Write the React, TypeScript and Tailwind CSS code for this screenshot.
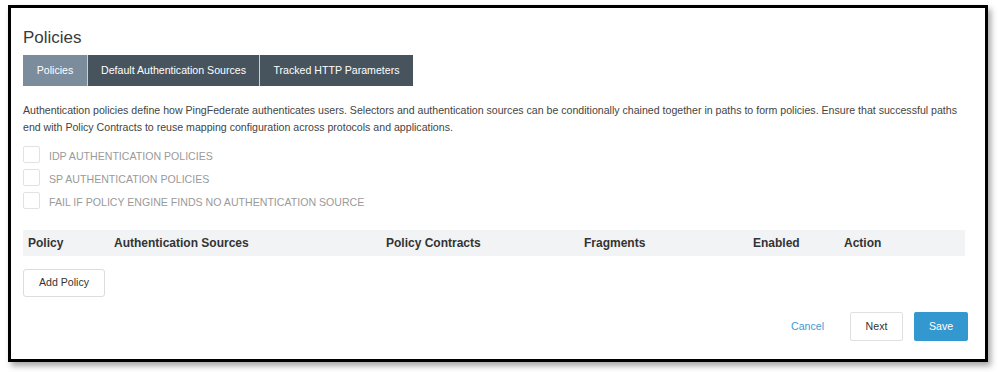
import React from 'react';

const tabs = ['Policies', 'Default Authentication Sources', 'Tracked HTTP Parameters'];

const options = [
  'IDP AUTHENTICATION POLICIES',
  'SP AUTHENTICATION POLICIES',
  'FAIL IF POLICY ENGINE FINDS NO AUTHENTICATION SOURCE',
];

const columns = [
  { label: 'Policy', width: 'w-[86px]' },
  { label: 'Authentication Sources', width: 'w-[272px]' },
  { label: 'Policy Contracts', width: 'w-[198px]' },
  { label: 'Fragments', width: 'w-[169px]' },
  { label: 'Enabled', width: 'w-[91px]' },
  { label: 'Action', width: 'flex-1' },
];

export default function App() {
  const [active, setActive] = React.useState(0);
  const [checked, setChecked] = React.useState<boolean[]>([false, false, false]);

  return (
    <div className="h-[372px] w-[998px] bg-white pl-[8px] pt-[5px] font-['Liberation_Sans',Arial,sans-serif]">
      <div className="flex h-[357px] w-[980px] flex-col border-[3px] border-black bg-white px-[12px] pt-[19px] shadow-[3px_4px_6px_rgba(0,0,0,0.35)]">
        <h1 className="text-[17px] leading-[22px] text-[#3a3a3a]">Policies</h1>

        <div className="mt-[6px] flex">
          {tabs.map((t, i) => (
            <button
              key={t}
              onClick={() => setActive(i)}
              className={
                'h-[31px] text-[10.6px] text-white ' +
                (i > 0 ? 'border-l border-[#c9d0d6] ' : '') +
                (i === active ? 'bg-[#7b8c9c] ' : 'bg-[#47545d] ') +
                (i === 0 ? 'w-[64px]' : i === 1 ? 'w-[172px]' : 'w-[154px]')
              }
            >
              {t}
            </button>
          ))}
        </div>

        <p className="mt-[16px] w-[945px] text-[10.6px] leading-[17px] text-[#444]">
          Authentication policies define how PingFederate authenticates users. Selectors and authentication sources
          can be conditionally chained together in paths to form policies. Ensure that successful paths end with
          Policy Contracts to reuse mapping configuration across protocols and applications.
        </p>

        <div className="mt-[10px] flex flex-col gap-[6px]">
          {options.map((o, i) => (
            <label key={o} className="flex h-[17px] cursor-pointer items-center">
              <input
                type="checkbox"
                className="sr-only"
                checked={checked[i]}
                onChange={() => setChecked(checked.map((c, j) => (j === i ? !c : c)))}
              />
              <span className="flex h-[17px] w-[17px] items-center justify-center rounded-[2px] border border-[#e2e2e2] bg-white text-[11px] text-[#3a9ad4]">
                {checked[i] ? '✓' : ''}
              </span>
              <span className="ml-[9px] pt-[4px] text-[10.6px] text-[#9a9a9a]">{o}</span>
            </label>
          ))}
        </div>

        <div className="mt-[21px] flex h-[26px] w-[942px] items-center bg-[#f2f3f5] pl-[5px]">
          {columns.map((c) => (
            <div key={c.label} className={c.width + ' text-[12px] font-bold text-[#333]'}>
              {c.label}
            </div>
          ))}
        </div>

        <div className="mt-[13px]">
          <button className="h-[28px] w-[82px] rounded-[3px] border border-[#dcdcdc] bg-white text-[10.6px] text-[#333]">
            Add Policy
          </button>
        </div>

        <div className="mt-[15px] flex items-center justify-end pr-[5px]">
          <button className="text-[10.6px] text-[#3d9bd6]">Cancel</button>
          <button className="ml-[26px] h-[29px] w-[53px] rounded-[2px] border border-[#e0e0e0] bg-white text-[10.6px] text-[#333]">
            Next
          </button>
          <button className="ml-[11px] h-[29px] w-[54px] rounded-[2px] bg-[#3498d0] text-[10.6px] text-white">
            Save
          </button>
        </div>
      </div>
    </div>
  );
}
